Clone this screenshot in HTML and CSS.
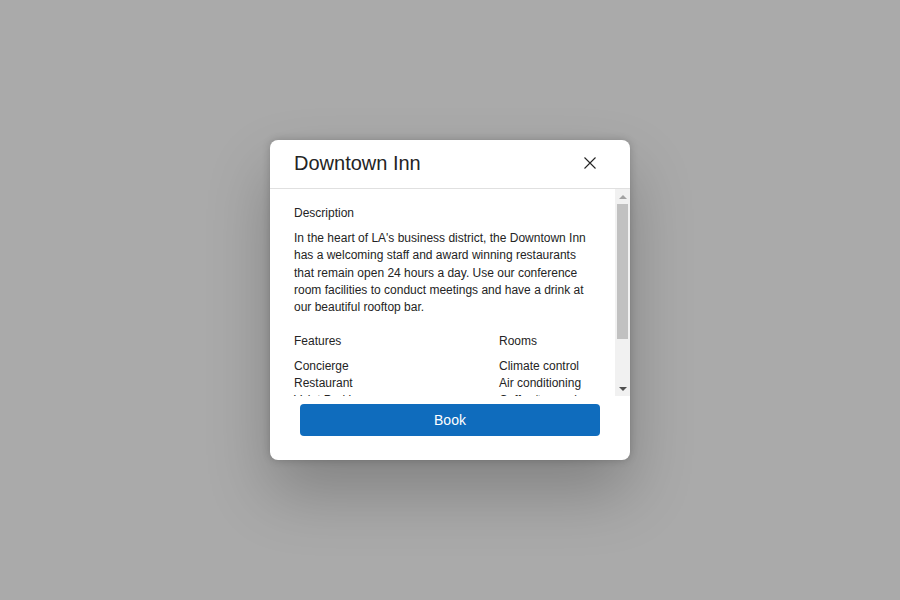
FILE: index.html
```html
<!DOCTYPE html>
<html lang="en">
<head>
<meta charset="utf-8">
<title>Downtown Inn</title>
<link rel="stylesheet" href="styles.css">
</head>
<body>
<div class="backdrop">
  <div class="dialog" role="dialog" aria-labelledby="dlg-title">
    <div class="dialog-header">
      <h2 id="dlg-title" class="dialog-title">Downtown Inn</h2>
      <button class="close-btn" aria-label="Close">
        <svg width="12" height="12" viewBox="0 0 12 12" aria-hidden="true">
          <path d="M0.5 0.5 L11.5 11.5 M11.5 0.5 L0.5 11.5" stroke="#242424" stroke-width="1.1" fill="none"/>
        </svg>
      </button>
    </div>
    <div class="dialog-body-wrap">
      <div class="dialog-body">
        <div class="section-label">Description</div>
        <p class="description">In the heart of LA's business district, the Downtown Inn has a welcoming staff and award winning restaurants that remain open 24 hours a day. Use our conference room facilities to conduct meetings and have a drink at our beautiful rooftop bar.</p>
        <div class="columns">
          <div class="column">
            <div class="section-label">Features</div>
            <ul class="list">
              <li>Concierge</li>
              <li>Restaurant</li>
              <li>Valet Parking</li>
              <li>Fitness center</li>
              <li>Free WiFi</li>
            </ul>
          </div>
          <div class="column">
            <div class="section-label">Rooms</div>
            <ul class="list">
              <li>Climate control</li>
              <li>Air conditioning</li>
              <li>Coffee/tea maker</li>
              <li>Mini fridge</li>
              <li>Flat-screen TV</li>
            </ul>
          </div>
        </div>
      </div>
      <div class="scrollbar" aria-hidden="true">
        <div class="sb-btn"><span class="arrow-up"></span></div>
        <div class="sb-track"><div class="sb-thumb"></div></div>
        <div class="sb-btn"><span class="arrow-down"></span></div>
      </div>
    </div>
    <div class="dialog-footer">
      <button class="book-btn">Book</button>
    </div>
  </div>
</div>
</body>
</html>
```
FILE: styles.css
```css
html, body {
  margin: 0;
  padding: 0;
  height: 100%;
}
body {
  background: #aaaaaa;
  font-family: "Liberation Sans", Arial, sans-serif;
  color: #242424;
}
.backdrop {
  height: 100%;
  display: flex;
  align-items: center;
  justify-content: center;
}
.dialog {
  width: 360px;
  height: 320px;
  background: #ffffff;
  border-radius: 8px;
  box-shadow: 0 32px 64px rgba(0,0,0,0.24), 0 0 8px rgba(0,0,0,0.2);
  display: flex;
  flex-direction: column;
  overflow: hidden;
}
.dialog-header {
  height: 49px;
  box-sizing: border-box;
  border-bottom: 1px solid #e0e0e0;
  padding: 0 34px 2px 24px;
  display: flex;
  align-items: center;
  justify-content: space-between;
  flex: none;
}
.dialog-title {
  margin: 0;
  font-size: 20px;
  font-weight: 400;
  line-height: 28px;
  color: #242424;
}
.close-btn {
  border: 0;
  background: transparent;
  padding: 0;
  width: 12px;
  height: 12px;
  display: flex;
  align-items: center;
  justify-content: center;
  cursor: pointer;
}
.dialog-body-wrap {
  height: 207px;
  flex: none;
  display: flex;
}
.dialog-body {
  flex: 1;
  min-width: 0;
  overflow: hidden;
  box-sizing: border-box;
  padding: 16px 24px 16px 24px;
  font-size: 12px;
}
.scrollbar {
  width: 15px;
  flex: none;
  background: #f1f1f1;
  display: flex;
  flex-direction: column;
}
.sb-btn {
  height: 15px;
  flex: none;
  display: flex;
  align-items: center;
  justify-content: center;
}
.arrow-up {
  width: 0;
  height: 0;
  border-left: 4px solid transparent;
  border-right: 4px solid transparent;
  border-bottom: 4px solid #a3a3a3;
}
.arrow-down {
  width: 0;
  height: 0;
  border-left: 4px solid transparent;
  border-right: 4px solid transparent;
  border-top: 4px solid #505050;
}
.sb-track {
  flex: 1;
  padding: 0 2px;
}
.sb-thumb {
  height: 135px;
  background: #c1c1c1;
}
.section-label {
  font-size: 12px;
  line-height: 16px;
}
.description {
  margin: 9px 0 17px;
  line-height: 17.25px;
}
.columns {
  display: grid;
  grid-template-columns: 205px 1fr;
}
.list {
  list-style: none;
  margin: 9px 0 0;
  padding: 0;
  line-height: 17px;
}
.dialog-footer {
  flex: 1;
  padding: 8px 30px 0;
}
.book-btn {
  width: 100%;
  height: 32px;
  border: 0;
  border-radius: 4px;
  background: #0f6cbd;
  color: #ffffff;
  font-family: "Liberation Sans", Arial, sans-serif;
  font-size: 14px;
  cursor: pointer;
}
```
